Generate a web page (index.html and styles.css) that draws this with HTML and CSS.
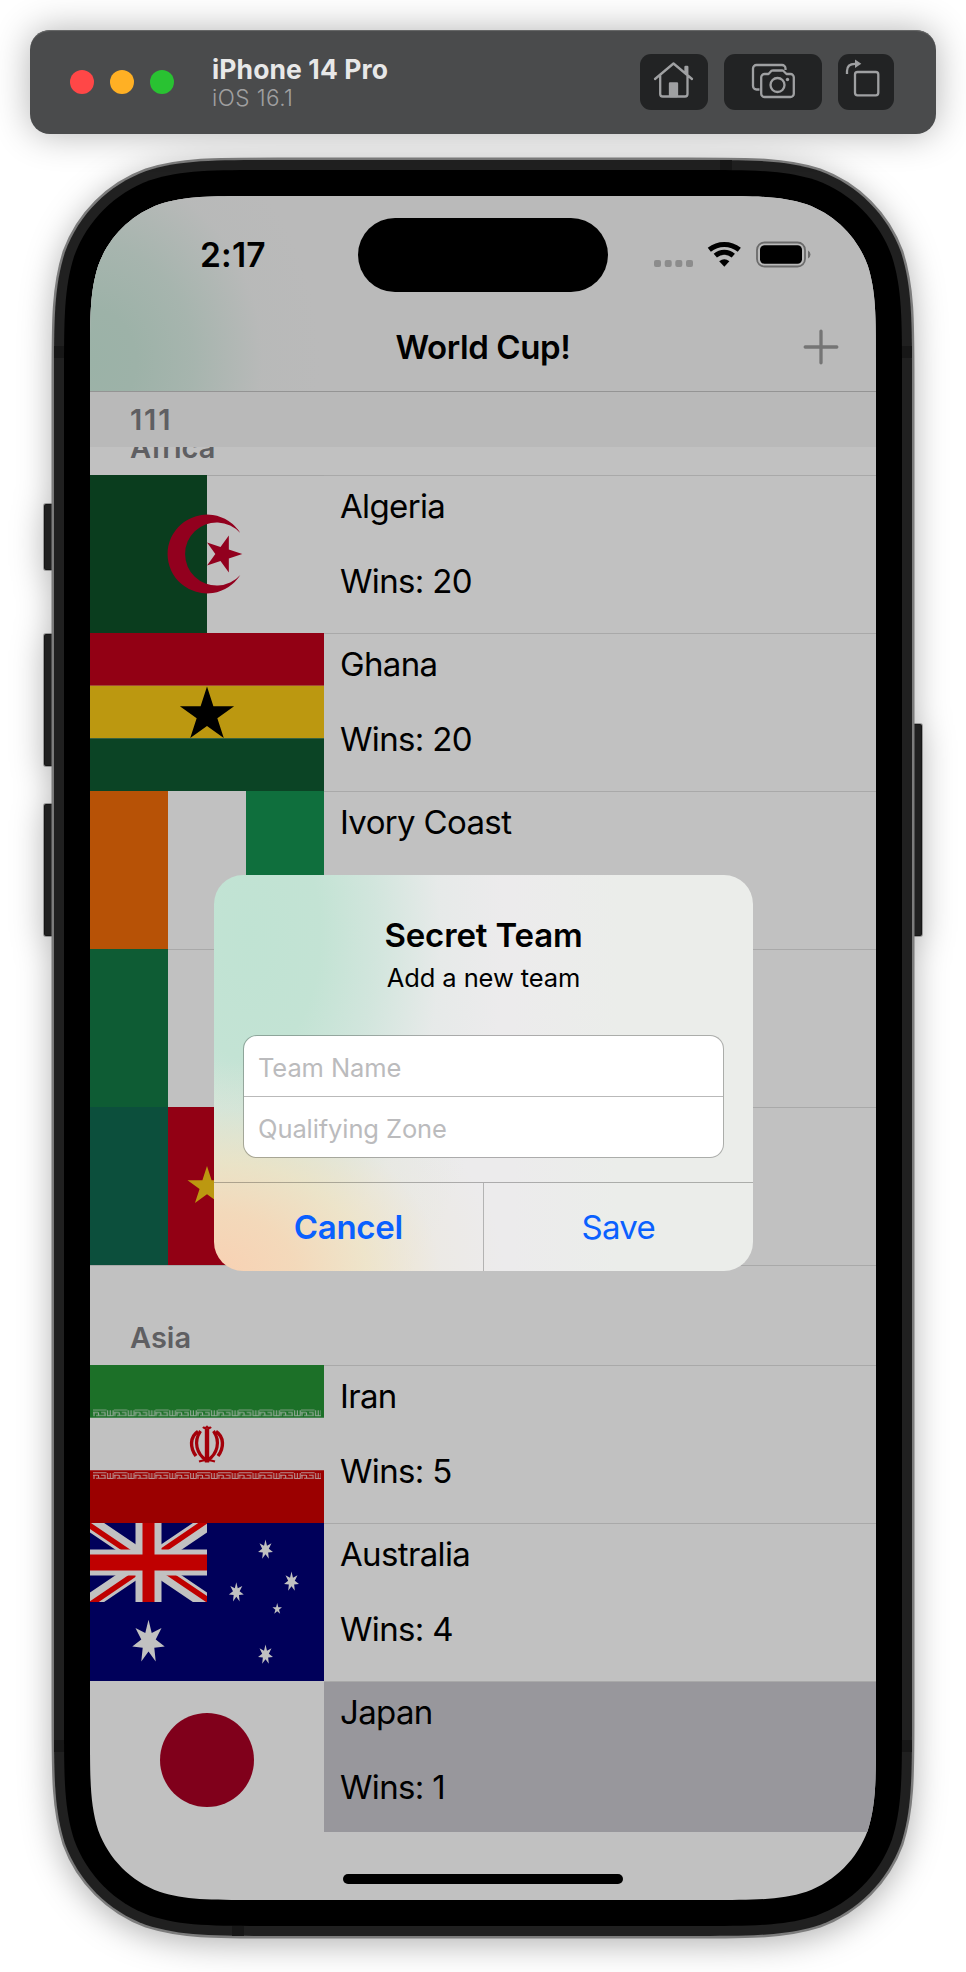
FILE: index.html
```
<!DOCTYPE html>
<html lang="en">
<head>
<meta charset="utf-8">
<title>World Cup!</title>
<link rel="stylesheet" href="styles.css">
</head>
<body>
<svg class="defs" width="0" height="0" aria-hidden="true">
  <defs>
    <path id="star5" d="M0-1 .2245-.309 .951-.309 .363.118 .588.809 0 .382-.588.809-.363.118-.951-.309-.2245-.309Z"/>
    <path id="star7" d="M0-9 1.74-3.6 7.04-5.61 3.9-.89 8.77 2 3.13 2.49 3.9 8.11 0 4-3.9 8.11-3.13 2.49-8.77 2-3.9-.89-7.04-5.61-1.74-3.6Z"/>
    <pattern id="kufic" x="3" y="0" width="20.8" height="8" patternUnits="userSpaceOnUse">
      <path d="M0 .8H13.500M0 3.300H5M1 3V7M5.500 3V6M3 6.300H13M8 3.300H12V6M14.500 1V6.500H20V1M17.200 1V6" fill="none" stroke="#c1c1c1" stroke-opacity=".75" stroke-width="1.1"/>
    </pattern>
  </defs>
</svg>

<header class="toolbar">
  <div class="lights"><i class="light red"></i><i class="light amber"></i><i class="light green"></i></div>
  <div class="device">
    <div class="device-name">iPhone 14 Pro</div>
    <div class="device-os">iOS 16.1</div>
  </div>
  <div class="tools">
    <button class="tool home" aria-label="Home">
      <svg width="68" height="56" viewBox="0 0 68 56" fill="none" stroke="#9fa0a2" stroke-width="2.3" stroke-linecap="round" stroke-linejoin="round"><path d="M15 25 33.500 9.500 52 25M20.200 21.500V40a2.500 2.500 0 0 0 2.500 2.500H45a2.500 2.500 0 0 0 2.500-2.500V21.500M45.500 18.500V13H47.300V20.500"/><path d="M30 29.500H37V42H30Z" fill="#9fa0a2"/></svg>
    </button>
    <button class="tool camera" aria-label="Screenshot">
      <svg width="98" height="56" viewBox="0 0 98 56" fill="none" stroke="#9fa0a2" stroke-width="2.3" stroke-linejoin="round"><path d="M35.500 35.500H32.500A3.500 3.500 0 0 1 29 32V14.500A3.500 3.500 0 0 1 32.500 11H58A3.500 3.500 0 0 1 61.500 14.500V16"/><path d="M40.500 20H44.500L47.500 16.800Q48 16.500 49 16.500H58Q59 16.500 59.500 17L62.500 20H66.500A3.300 3.300 0 0 1 69.800 23.300V39.700A3.300 3.300 0 0 1 66.500 43H40.500A3.300 3.300 0 0 1 37.200 39.700V23.300A3.300 3.300 0 0 1 40.500 20Z"/><circle cx="53.500" cy="31" r="7"/><circle cx="63.500" cy="25.500" r="1.700" fill="#9fa0a2" stroke="none"/></svg>
    </button>
    <button class="tool rotate" aria-label="Rotate">
      <svg width="56" height="56" viewBox="0 0 56 56" fill="none" stroke="#9fa0a2" stroke-width="2.3"><rect x="17" y="18" width="23.300" height="23.300" rx="2.500"/><path d="M9 20V17Q9 9.800 17 9.800"/><path d="M17 5.500 23.300 9.800 17 14Z" fill="#9fa0a2" stroke="none"/></svg>
    </button>
  </div>
</header>

<main class="phone">
  <svg class="bezel" width="966" height="1838" viewBox="0 134 966 1838" aria-hidden="true">
    <g class="side-keys">
      <rect x="44" y="504" width="12" height="66" rx="2"/>
      <rect x="44" y="634" width="12" height="132" rx="2"/>
      <rect x="44" y="804" width="12" height="132" rx="2"/>
      <rect x="910" y="724" width="12" height="212" rx="2"/>
    </g>
    <path class="rim" id="shell" d="M277.190 160H688.810c64.270 0 96.400 0 130.990 10.940c37.760 13.750 67.510 43.500 81.260 81.260c10.940 34.590 10.940 66.720 10.940 130.990V1712.810c0 64.270 0 96.400-10.940 130.990c-13.750 37.760-43.500 67.510-81.260 81.260c-34.590 10.940-66.720 10.940-130.990 10.940H277.190c-64.270 0-96.400 0-130.990-10.940c-37.760-13.750-67.510-43.500-81.260-81.260c-10.940-34.590-10.940-66.720-10.940-130.990V383.190c0-64.270 0-96.400 10.940-130.990c13.750-37.760 43.500-67.510 81.260-81.260c34.590-10.940 66.720-10.940 130.990-10.940Z"/>
    <path fill="#171717" d="M720 160h12v10h-12zM54 346h10v12h-10zM902 346h10v12h-10zM54 1740h10v12h-10zM902 1740h10v12h-10zM232 1926h12v10h-12z"/>
    <path d="M271.900 170H694.100c59.860 0 89.800 0 122.020 10.190c35.170 12.810 62.880 40.520 75.690 75.690c10.190 32.220 10.190 62.150 10.190 122.020V1718.100c0 59.860 0 89.800-10.190 122.020c-12.810 35.170-40.520 62.880-75.690 75.690c-32.220 10.190-62.150 10.190-122.020 10.190H271.900c-59.860 0-89.800 0-122.020-10.190c-35.170-12.810-62.880-40.520-75.690-75.690c-10.190-32.220-10.190-62.150-10.190-122.020V377.900c0-59.860 0-89.800 10.190-122.020c12.810-35.170 40.520-62.880 75.690-75.690c32.220-10.190 62.150-10.190 122.020-10.190Z"/>
  </svg>

  <div class="screen">
    <div class="nav">
      <div class="status">
        <div class="time">2:17</div>
        <div class="island"></div>
        <div class="indicators">
          <svg width="160" height="30" viewBox="0 0 160 30"><g fill="#8c8c8c"><rect x="0" y="20" width="7" height="7" rx="2"/><rect x="10.700" y="20" width="7" height="7" rx="2"/><rect x="21.300" y="20" width="7" height="7" rx="2"/><rect x="32" y="20" width="7" height="7" rx="2"/></g>
            <g fill="none" stroke="#000" stroke-width="5"><path d="M55.300 9.800Q62 4.500 70.300 4.500T85.300 9.800"/><path d="M61.300 15.700Q65.300 12.300 70.300 12.300T79.300 15.700"/></g><path d="M65.200 21.300Q70.300 17.200 75.400 21.300L70.300 26.700Z"/>
            <rect x="103" y="2.500" width="48" height="24" rx="7.500" fill="none" stroke="#6b6b6b" stroke-width="1.800"/><rect x="106" y="5.300" width="42" height="18.400" rx="4.500"/><path d="M154 10.500q2.500 1.500 2.500 4t-2.500 4Z" fill="#6b6b6b"/></svg>
        </div>
      </div>
      <div class="navbar">
        <h1>World Cup!</h1>
        <svg class="plus" width="36" height="36" viewBox="0 0 36 36" stroke="#757575" stroke-width="3.300" stroke-linecap="round"><path d="M18 2.200V33.800M2.200 18H33.800"/></svg>
      </div>
    </div>

    <div class="sticky-head">111</div>
    <div class="clipped-head"><span>Africa</span></div>

    <ul class="teams first">
      <li class="team">
        <svg class="flag" viewBox="0 0 234 158"><path fill="#0a3d1e" d="M0 0H117V158H0Z"/><path fill="#92001e" d="M150.300 58A39.400 39.400 0 1 0 150.300 100A31.600 31.600 0 1 1 150.300 58Z"/><use href="#star5" fill="#92001e" transform="translate(132.800 79) rotate(90) scale(19.500)"/></svg>
        <div class="info"><p>Algeria</p><p>Wins: 20</p></div>
      </li>
      <li class="team">
        <svg class="flag" viewBox="0 0 234 158"><path fill="#920014" d="M0 0H234V52.700H0Z"/><path fill="#bc9810" d="M0 52.700H234V105.300H0Z"/><path fill="#0b4425" d="M0 105.300H234V158H0Z"/><use href="#star5" transform="translate(117 82) scale(28.500)"/></svg>
        <div class="info"><p>Ghana</p><p>Wins: 20</p></div>
      </li>
      <li class="team">
        <svg class="flag" viewBox="0 0 234 158"><path fill="#b75206" d="M0 0H78V158H0Z"/><path fill="#0f6f3d" d="M156 0H234V158H156Z"/></svg>
        <div class="info"><p>Ivory Coast</p></div>
      </li>
      <li class="team">
        <svg class="flag" viewBox="0 0 234 158"><path fill="#a9a9a9" d="M78 0H156V1H78Z"/><path fill="#0e5c34" d="M0 0H78V158H0ZM156 0H234V158H156Z"/></svg>
        <div class="info"></div>
      </li>
      <li class="team">
        <svg class="flag" viewBox="0 0 234 158"><path fill="#0c4f3c" d="M0 0H78V158H0Z"/><path fill="#920014" d="M78 0H156V158H78Z"/><path fill="#bc9810" d="M156 0H234V158H156Z"/><use href="#star5" fill="#bc9810" transform="translate(117 79.500) scale(20.500)"/></svg>
        <div class="info"></div>
      </li>
    </ul>

    <div class="section-head">Asia</div>

    <ul class="teams">
      <li class="team">
        <svg class="flag" viewBox="0 0 234 158"><path fill="#1c7028" d="M0 0H234V52.700H0Z"/><path fill="#9b0000" d="M0 105.300H234V158H0Z"/><g transform="translate(0 44.300)"><rect x="3" width="228" height="7.400" fill="url(#kufic)"/></g><g transform="translate(0 107)"><rect x="3" width="228" height="7.400" fill="url(#kufic)"/></g>
          <g fill="none" stroke="#a3000a"><path d="M117 63.500V97.500" stroke-width="4.400"/><path d="M113 62Q115 64 117 62Q119 64 121 62" stroke-width="2.400"/><path d="M110.500 66C103 77 107 89 116 95M123.500 66C131 77 127 89 118 95" stroke-width="3.200"/><path d="M108 66.500C99.500 72 100 83 106 91M126 66.500C134.500 72 134 83 128 91" stroke-width="3.400"/><path d="M109 96.500Q117 94 125 96.500" stroke-width="2.200"/></g></svg>
        <div class="info"><p>Iran</p><p>Wins: 5</p></div>
      </li>
      <li class="team">
        <svg class="flag" viewBox="0 0 234 158"><path fill="#00005a" d="M0 0H234V158H0Z"/>
          <svg width="117" height="79" viewBox="0 0 117 79" overflow="hidden"><path d="M0 0 117 79M117 0 0 79" stroke="#c1c1c1" stroke-width="15.800"/><path d="M-2 1.300 56 40.500M119 77.700 61 38.500M-2 83 56 43.500M119-4 61 35.500" stroke="#bf0000" stroke-width="5.500"/><path d="M58.500 0V79M0 39.500H117" stroke="#c1c1c1" stroke-width="26"/><path d="M58.500 0V79" stroke="#c1c1c1" stroke-width="19"/><path d="M58.500 0V79" stroke="#bf0000" stroke-width="12"/><path d="M0 39.500H117" stroke="#bf0000" stroke-width="16"/></svg>
          <g fill="#c1c1c1"><use href="#star7" transform="translate(58.500 118.700) scale(1.850 2.450)"/><use href="#star7" transform="translate(175.500 26.700) scale(.850 1.130)"/><use href="#star7" transform="translate(146.300 69.300) scale(.850 1.130)"/><use href="#star7" transform="translate(201.500 58.700) scale(.850 1.130)"/><use href="#star7" transform="translate(175.500 131.700) scale(.850 1.130)"/><use href="#star5" transform="translate(187.200 86) scale(5 6)"/></g></svg>
        <div class="info"><p>Australia</p><p>Wins: 4</p></div>
      </li>
      <li class="team">
        <svg class="flag" viewBox="0 0 234 158"><circle cx="117" cy="79" r="47" fill="#80001b"/></svg>
        <div class="info selected"><p>Japan</p><p>Wins: 1</p></div>
      </li>
    </ul>
    <div class="home-bar"></div>
  </div>

  <div class="alert" role="dialog">
    <div class="alert-body">
      <h2>Secret Team</h2>
      <p class="message">Add a new team</p>
      <div class="fields">
        <div class="field">Team Name</div>
        <div class="field second">Qualifying Zone</div>
      </div>
    </div>
    <div class="actions">
      <div class="action cancel">Cancel</div>
      <div class="action save">Save</div>
    </div>
  </div>
</main>
</body>
</html>
```
FILE: styles.css
```
* { box-sizing: border-box; }
body {
  margin: 0;
  width: 966px;
  height: 1972px;
  overflow: hidden;
  background: #fff;
  font-family: Inter, "Liberation Sans", sans-serif;
  color: #000;
}
h1, h2, p, ul { margin: 0; padding: 0; }
svg { display: block; }
.defs { position: absolute; }

.toolbar {
  display: flex;
  align-items: center;
  width: 906px;
  height: 104px;
  margin: 30px 30px 0;
  padding: 0 42px 0 40px;
  border-radius: 20px;
  background: #4a4b4c;
  box-shadow: 0 0 36px rgba(0, 0, 0, .3), inset 0 2px 1px -1px #6a6b6b;
}
.lights { display: flex; gap: 16px; }
.light { width: 24px; height: 24px; border-radius: 50%; }
.red { background: #ff4747; }
.amber { background: #ffb024; }
.green { background: #29c232; }
.device { margin-left: 38px; white-space: nowrap; }
.device-name {
  margin-top: -2px;
  font-size: 26.500px;
  font-weight: 700;
  line-height: 34px;
  letter-spacing: .1px;
  color: #e8e8e8;
}
.device-os {
  font-size: 22.500px;
  font-weight: 300;
  line-height: 24px;
  letter-spacing: .45px;
  color: #a0a0a1;
}
.tools { display: flex; gap: 16px; margin-left: auto; }
.tool {
  height: 56px;
  padding: 0;
  border: 0;
  border-radius: 11px;
  background: #222324;
}
.home { width: 68px; }
.camera { width: 98px; }
.rotate { width: 56px; }

.phone { position: relative; height: 1838px; padding: 62px 90px 0; }
.bezel { position: absolute; left: 0; top: 0; z-index: -1; filter: drop-shadow(0 6px 16px rgba(0, 0, 0, .3)); }
.side-keys { fill: #202020; stroke: rgba(0, 0, 0, .3); stroke-width: 2; }
.rim { fill: #202020; stroke: #7c7c7c; stroke-width: 5px; paint-order: stroke; }

.screen {
  display: flex;
  flex-direction: column;
  height: 1704px;
  background: #c1c1c1;
  clip-path: path("M168.150 0H617.850c48.420 0 72.630 0 98.690 8.240c28.450 10.360 50.860 32.770 61.220 61.220c8.240 26.060 8.240 50.270 8.240 98.690V1535.850c0 48.420 0 72.630-8.240 98.690c-10.360 28.450-32.770 50.860-61.220 61.220c-26.060 8.240-50.270 8.240-98.690 8.240H168.150c-48.420 0-72.630 0-98.690-8.240c-28.450-10.360-50.860-32.770-61.220-61.220c-8.240-26.060-8.240-50.270-8.240-98.690V168.150c0-48.420 0-72.630 8.240-98.690c10.360-28.450 32.770-50.860 61.220-61.220c26.060-8.240 50.270-8.240 98.690-8.240Z");
}
.nav {
  flex: none;
  height: 196px;
  border-bottom: 1px solid #949494;
  background:
    radial-gradient(ellipse 230px 260px at 0 165px, #9bb2a7 0, #9db2a8 20%, rgba(160, 179, 170, .75) 45%, rgba(180, 184, 182, .3) 75%, rgba(186, 186, 186, 0) 100%),
    #bababa;
}
.status {
  display: grid;
  grid-template-columns: 268px 250px 1fr;
  align-items: center;
  height: 118px;
}
.time {
  padding-left: 110px;
  font-size: 33.500px;
  font-weight: 600;
  line-height: 118px;
  letter-spacing: .2px;
}
.island { height: 74px; border-radius: 37px; background: #000; }
.indicators { padding-left: 46px; }
.navbar {
  display: grid;
  grid-template-columns: 1fr 300px 1fr;
  align-items: center;
  height: 66px;
}
h1 {
  grid-column: 2;
  text-align: center;
  font-size: 33px;
  font-weight: 600;
  line-height: 66px;
  letter-spacing: -.4px;
}
.plus { justify-self: end; margin-right: 37px; }
.sticky-head, .clipped-head, .section-head {
  flex: none;
  padding-left: 40px;
  font-size: 29px;
  font-weight: 600;
  color: #5f5f62;
}
.sticky-head { height: 55px; line-height: 55px; letter-spacing: 1.800px; background: #b9b9b9; }
.clipped-head {
  display: flex;
  align-items: flex-end;
  height: 28px;
  overflow: hidden;
  line-height: 54px;
}
.section-head { height: 100px; padding-top: 44px; line-height: 57px; }
.teams { flex: none; list-style: none; }
.first { border-bottom: 1px solid #a9a9a9; margin-bottom: -1px; }
.team { display: grid; grid-template-columns: 234px 1fr; height: 158px; }
.teams > :first-child { box-shadow: inset 0 1px 0 #a6a6a6; }
.flag { width: 234px; height: 158px; }
.info {
  padding: 10px 0 0 16px;
  border-top: 1px solid #a9a9a9;
}
.info p {
  height: 75px;
  font-size: 33px;
  line-height: 41px;
  letter-spacing: -.65px;
}
.selected { height: 151px; background: #98979c; }
.home-bar {
  flex: none;
  width: 280px;
  height: 10px;
  margin: 35px auto 0;
  border-radius: 5px;
  background: #000;
}

.alert {
  position: absolute;
  left: 214px;
  top: 741px;
  width: 539px;
  height: 396px;
  border-radius: 29px;
  overflow: hidden;
  background:
    radial-gradient(ellipse 290px 210px at 0 100%, #f8d1b3 0, rgba(244, 216, 184, .95) 28%, rgba(240, 226, 192, .75) 52%, rgba(236, 230, 214, .3) 78%, rgba(236, 236, 236, 0) 100%),
    radial-gradient(ellipse 255px 440px at 35px 60px, #c0e3d3 0, #c3e3d4 28%, rgba(203, 228, 217, .8) 50%, rgba(222, 232, 228, .4) 75%, rgba(236, 236, 236, 0) 100%),
    linear-gradient(90deg, #ecebec 55%, #ebedea 75%);
}
.alert-body { height: 308px; padding: 39px 29px 0; border-bottom: 1px solid rgba(0, 0, 0, .27); text-align: center; }
h2 { font-size: 33px; font-weight: 600; line-height: 42px; letter-spacing: -.15px; }
.message { padding-top: 1px; font-size: 25.500px; line-height: 42px; letter-spacing: -.1px; }
.fields {
  height: 123px;
  margin-top: 36px;
  border: 1px solid rgba(0, 0, 0, .27);
  border-radius: 14px;
  background: #fff;
  background-clip: padding-box;
  text-align: left;
}
.field {
  height: 60px;
  padding-left: 14px;
  font-size: 25.500px;
  line-height: 64px;
  letter-spacing: -.1px;
  color: #bbbbbd;
}
.field.second { height: 61px; border-top: 1px solid #b9b9b9; line-height: 63px; }
.actions { display: grid; grid-template-columns: 1fr 1fr; height: 88px; }
.action { text-align: center; font-size: 33px; line-height: 89px; letter-spacing: -.7px; color: #0a60ff; }
.cancel { font-weight: 600; letter-spacing: -.3px; border-right: 1px solid rgba(0, 0, 0, .24); }
```
